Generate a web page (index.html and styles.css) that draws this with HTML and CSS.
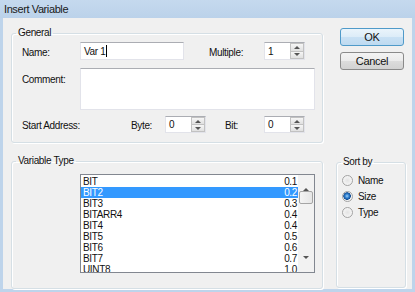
FILE: index.html
```html
<!DOCTYPE html>
<html lang="en">
<head>
    <meta charset="UTF-8">
    <title>Insert Variable</title>
    <link rel="stylesheet" href="styles.css">
</head>
<body>
    <div class="window">
        <div class="titlebar">Insert Variable</div>
        <div class="frame">
            <fieldset class="group">
                <legend>General</legend>
                <div class="general">
                    <div class="row row-name">
                        <span class="label w58">Name:</span>
                        <div class="field name-field">Var 1<span class="caret"></span></div>
                        <span class="label multiple">Multiple:</span>
                        <div class="spin">
                            <div class="spin-text">1</div>
                            <div class="spin-btns"><span class="up"></span><span class="down"></span></div>
                        </div>
                    </div>
                    <div class="row row-comment">
                        <span class="label w58 comment-label">Comment:</span>
                        <div class="field comment-field"></div>
                    </div>
                    <div class="row row-address">
                        <span class="label w109">Start Address:</span>
                        <span class="label w34">Byte:</span>
                        <div class="spin">
                            <div class="spin-text">0</div>
                            <div class="spin-btns"><span class="up"></span><span class="down"></span></div>
                        </div>
                        <span class="label bit">Bit:</span>
                        <div class="spin">
                            <div class="spin-text">0</div>
                            <div class="spin-btns"><span class="up"></span><span class="down"></span></div>
                        </div>
                    </div>
                </div>
            </fieldset>

            <div class="buttons">
                <button class="btn default">OK</button>
                <button class="btn">Cancel</button>
            </div>

            <fieldset class="group">
                <legend>Variable Type</legend>
                <div class="types">
                    <div class="list">
                        <div class="rows">
                            <div class="item"><span>BIT</span><span>0.1</span></div>
                            <div class="item selected"><span>BIT2</span><span>0.2</span></div>
                            <div class="item"><span>BIT3</span><span>0.3</span></div>
                            <div class="item"><span>BITARR4</span><span>0.4</span></div>
                            <div class="item"><span>BIT4</span><span>0.4</span></div>
                            <div class="item"><span>BIT5</span><span>0.5</span></div>
                            <div class="item"><span>BIT6</span><span>0.6</span></div>
                            <div class="item"><span>BIT7</span><span>0.7</span></div>
                            <div class="item"><span>UINT8</span><span>1.0</span></div>
                        </div>
                        <div class="scrollbar">
                            <div class="arrow"><span class="up"></span></div>
                            <div class="thumb"></div>
                            <div class="track"></div>
                            <div class="arrow"><span class="down"></span></div>
                        </div>
                    </div>
                </div>
            </fieldset>

            <fieldset class="group sort">
                <legend>Sort by</legend>
                <div class="sort-body">
                    <div class="radio-row"><span class="radio"></span>Name</div>
                    <div class="radio-row"><span class="radio checked"></span>Size</div>
                    <div class="radio-row"><span class="radio"></span>Type</div>
                </div>
            </fieldset>
        </div>
    </div>
</body>
</html>
```

FILE: styles.css
```css
body {
    margin: 0;
    background-color: #f0f0f0;
    font-family: "Liberation Sans", Arial, sans-serif;
    font-size: 10px;
    letter-spacing: -0.35px;
    color: #111;
}

.window {
    width: 415px;
    height: 292px;
    display: flex;
    flex-direction: column;
}

.titlebar {
    height: 18px;
    line-height: 18px;
    padding-left: 4px;
    font-size: 11px;
    letter-spacing: -0.4px;
    color: #1a1a1a;
    background: linear-gradient(#c5d9ee, #bbd2ea);
}

.frame {
    flex: 1;
    border: 3px solid #bed4eb;
    border-top: 0;
    background-color: #f0f0f0;
    display: grid;
    grid-template-columns: 312px 70px;
    grid-template-rows: 116px 1fr;
    column-gap: 13px;
    row-gap: 12px;
    padding: 9px 0 0 8px;
}

.group {
    margin: 0;
    padding: 0;
    min-inline-size: 0;
    border: 1px solid #d5dfe5;
    border-radius: 3px;
    box-shadow: inset 1px 1px 0 #fff, 1px 1px 0 #fff;
}

.group legend {
    margin-left: 4px;
    padding: 0 2px;
    line-height: 12px;
}

.general {
    padding: 3px 0 9px 10px;
}

.row {
    display: flex;
    align-items: center;
}

.row-name {
    height: 18px;
}

.row-comment {
    align-items: flex-start;
    margin-top: 8px;
}

.row-address {
    height: 17px;
    margin-top: 6px;
}

.label {
    flex: none;
    padding-top: 2px;
}

.w58 { width: 58px; }
.w109 { width: 109px; }
.w34 { width: 34px; }

.multiple {
    width: 55px;
    margin-left: 25px;
}

.bit {
    width: 39px;
    margin-left: 19px;
}

.comment-label {
    padding-top: 6px;
}

.field {
    box-sizing: border-box;
    background-color: #fff;
    border: 1px solid #e2e3ea;
    border-top-color: #abadb3;
}

.name-field {
    width: 104px;
    height: 18px;
    padding-left: 3px;
    display: flex;
    align-items: center;
}

.caret {
    width: 1px;
    height: 12px;
    margin-left: 1px;
    background-color: #000;
}

.comment-field {
    width: 235px;
    height: 42px;
}

.spin {
    box-sizing: border-box;
    width: 41px;
    height: 100%;
    display: flex;
    background-color: #fff;
    border: 1px solid #e2e3ea;
    border-top-color: #abadb3;
}

.spin-text {
    flex: 1;
    padding-left: 3px;
    display: flex;
    align-items: center;
}

.spin-btns {
    width: 14px;
    display: flex;
    flex-direction: column;
}

.spin-btns span {
    flex: 1;
    display: flex;
    align-items: center;
    justify-content: center;
    border: 1px solid #c2c2c2;
    background: linear-gradient(#f6f6f6, #e0e0e0);
}

.spin-btns span + span {
    border-top: 0;
}

.up::after,
.down::after {
    content: "";
    width: 0;
    height: 0;
    border-left: 3px solid transparent;
    border-right: 3px solid transparent;
}

.up::after {
    border-bottom: 3px solid #555;
}

.down::after {
    border-top: 3px solid #555;
}

.buttons {
    display: flex;
    flex-direction: column;
    gap: 6px;
    padding: 1px 0 0 4px;
}

.btn {
    box-sizing: border-box;
    width: 64px;
    height: 18px;
    padding: 0;
    font-family: inherit;
    font-size: 11px;
    letter-spacing: -0.3px;
    color: #111;
    border: 1px solid #8a8a8a;
    border-radius: 3px;
    background: linear-gradient(#f3f3f3 0%, #ebebeb 50%, #dcdcdc 51%, #d2d2d2 100%);
}

.default {
    border-color: #4f9ac9;
    background: linear-gradient(#eaf4fb 0%, #dcecf8 50%, #c9e1f4 51%, #bedaf0 100%);
}

.types {
    padding: 7px 0 6px 68px;
}

.list {
    box-sizing: border-box;
    width: 235px;
    height: 99px;
    display: flex;
    background-color: #fff;
    border: 1px solid #828790;
}

.rows {
    flex: 1;
    overflow: hidden;
    padding-top: 1px;
}

.item {
    height: 11px;
    line-height: 11px;
    display: flex;
    justify-content: space-between;
    padding: 0 1px 0 2px;
}

.item.selected {
    background-color: #3399ff;
    color: #fff;
}

.scrollbar {
    width: 16px;
    display: flex;
    flex-direction: column;
    background-color: #f2f2f2;
}

.scrollbar .arrow {
    height: 15px;
    display: flex;
    align-items: center;
    justify-content: center;
}

.thumb {
    box-sizing: border-box;
    height: 13px;
    margin: 1px 1px 0;
    border: 1px solid #a5a5a5;
    border-radius: 2px;
    background: linear-gradient(90deg, #f4f4f4, #e6e6e6);
}

.track {
    flex: 1;
}

.sort {
    margin: 1px 0 1px;
}

.sort-body {
    padding: 4px 0 0 5px;
}

.radio-row {
    height: 16px;
    display: flex;
    align-items: center;
}

.radio {
    box-sizing: border-box;
    width: 11px;
    height: 11px;
    margin-right: 5px;
    border-radius: 50%;
    border: 1px solid #a3a3a3;
    background: radial-gradient(circle at 50% 50%, #e4e4e4 0, #f6f6f6 5px);
}

.radio.checked {
    background: radial-gradient(circle at 45% 45%, #9fd0f6 0, #2e7fd0 2px, #144f94 3.5px, #f2f2f2 4px);
}
```
